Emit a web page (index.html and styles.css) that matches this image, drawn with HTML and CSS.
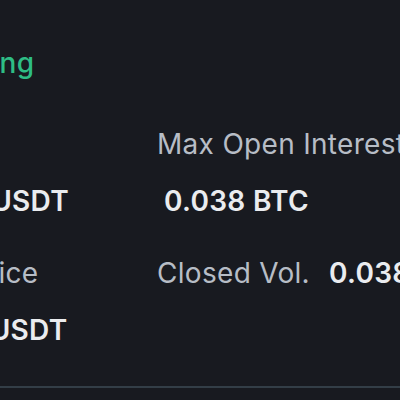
FILE: index.html
```html
<!DOCTYPE html>
<html lang="en">
<head>
    <meta charset="UTF-8">
    <meta name="viewport" content="width=device-width, initial-scale=1.0">
    <title>Position History</title>
    <link rel="stylesheet" href="styles.css">
</head>
<body>
    <div class="position">
        <!-- cabeçalho da posição -->
        <div class="head">
            <span class="symbol">BTCUSDT Perpetual</span>
            <span class="side">Long</span>
        </div>

        <div class="details">
            <div class="cell">
                <div class="label">Entry Price</div>
                <div class="value indent">26,384.905 USDT</div>
            </div>
            <div class="cell">
                <div class="label">Max Open Interest</div>
                <div class="value indent-sm">0.038 BTC</div>
            </div>
            <div class="cell">
                <div class="label">Avg. Close Price</div>
                <div class="value indent">26,475.205 USDT</div>
            </div>
            <div class="cell">
                <div class="inline">
                    <span class="label">Closed Vol.</span>
                    <span class="value">0.038 BTC</span>
                </div>
            </div>
        </div>
    </div>
</body>
</html>
```

FILE: styles.css
```css
/* página */
body {
    margin: 0;
    background-color: #181a20;
    font-family: Inter, "Noto Sans", sans-serif;
    font-size: 28px;
    line-height: 34px;
    letter-spacing: 0.3px;
    overflow: hidden;
}

.position {
    padding: 46px 0 39px 0;
    border-bottom: 2px solid #333e47;
}

/* cabeçalho */
.head {
    display: flex;
    gap: 16px;
    margin-left: -324px;
    white-space: nowrap;
}

.symbol {
    color: #eaecef;
    font-weight: 600;
    visibility: hidden;
}

.side {
    color: #2ebd85;
    font-weight: 500;
}

/* grade de detalhes */
.details {
    display: grid;
    grid-template-columns: 340px auto;
    row-gap: 38px;
    margin-left: -183px;
    margin-top: 47px;
    white-space: nowrap;
}

.cell {
    display: flex;
    flex-direction: column;
    gap: 23px;
}

.label {
    color: #b7bdc6;
    font-weight: 400;
}

.value {
    color: #eaecef;
    font-weight: 600;
}

.indent {
    padding-left: 5px;
}

.indent-sm {
    padding-left: 7px;
}

.inline {
    display: flex;
    gap: 19px;
}
```
